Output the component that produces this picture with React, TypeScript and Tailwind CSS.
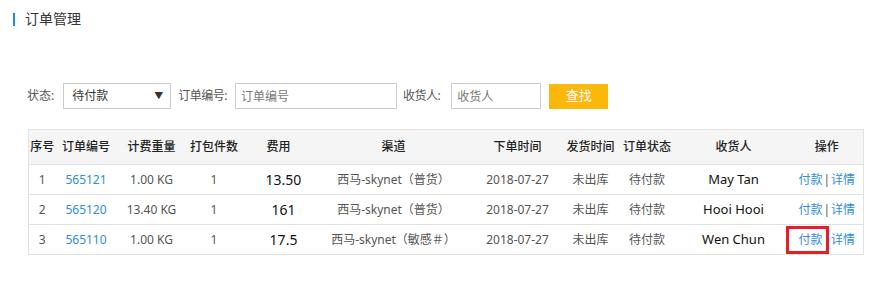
import React from 'react';

const FONT = { fontFamily: '"Noto Sans", "Noto Sans CJK SC", sans-serif' };

type Order = {
  no: number;
  id: string;
  weight: string;
  pkgs: number;
  fee: string;
  channel: string;
  date: string;
  ship: string;
  status: string;
  receiver: string;
};

const ORDERS: Order[] = [
  { no: 1, id: '565121', weight: '1.00 KG', pkgs: 1, fee: '13.50', channel: '西马-skynet（普货）', date: '2018-07-27', ship: '未出库', status: '待付款', receiver: 'May Tan' },
  { no: 2, id: '565120', weight: '13.40 KG', pkgs: 1, fee: '161', channel: '西马-skynet（普货）', date: '2018-07-27', ship: '未出库', status: '待付款', receiver: 'Hooi Hooi' },
  { no: 3, id: '565110', weight: '1.00 KG', pkgs: 1, fee: '17.5', channel: '西马-skynet（敏感＃）', date: '2018-07-27', ship: '未出库', status: '待付款', receiver: 'Wen Chun' },
];

const COLS = [
  { title: '序号', w: 27 },
  { title: '订单编号', w: 61 },
  { title: '计费重量', w: 70 },
  { title: '打包件数', w: 55 },
  { title: '费用', w: 74 },
  { title: '渠道', w: 156 },
  { title: '下单时间', w: 92 },
  { title: '发货时间', w: 54 },
  { title: '订单状态', w: 59 },
  { title: '收货人', w: 114 },
  { title: '操作', w: 73 },
];

export default function App() {
  return (
    <div className="w-[890px] h-[297px] bg-white text-[#333]" style={FONT}>
      {/* page title */}
      <div className="flex items-center pl-[13px] pt-[10px]">
        <span className="w-[2px] h-[13px] bg-[#1d8ce0]" />
        <span className="ml-[10px] text-[14px] leading-[18px] text-[#333]">订单管理</span>
      </div>

      {/* filters */}
      <div className="flex items-center pl-[27px] mt-[55px] text-[12px] text-[#555]">
        <span>状态:</span>
        <div className="ml-[9px] w-[108px] h-[26px] border border-[#ccc] flex items-center justify-between pl-[8px] pr-[7px] text-[#333]">
          <span>待付款</span>
          <span className="text-[9px] text-[#333]">▼</span>
        </div>
        <span className="ml-[7px] tracking-[-0.5px]">订单编号:</span>
        <input
          className="ml-[8px] w-[162px] h-[26px] border border-[#ccc] px-[5px] text-[12px] outline-none placeholder:text-[#777]"
          placeholder="订单编号"
        />
        <span className="ml-[6px] tracking-[-0.5px]">收货人:</span>
        <input
          className="ml-[11px] w-[90px] h-[26px] border border-[#ccc] px-[5px] text-[12px] outline-none placeholder:text-[#777]"
          placeholder="收货人"
        />
        <button className="ml-[8px] w-[59px] h-[25px] bg-[#fcb80a] text-white text-[13px]">查找</button>
      </div>

      {/* orders table */}
      <table className="ml-[28px] mt-[20px] w-[835px] table-fixed border-collapse text-[12px]">
        <colgroup>
          {COLS.map(c => (
            <col key={c.title} style={{ width: c.w }} />
          ))}
        </colgroup>
        <thead>
          <tr className="bg-[#f5f5f5] h-[35px]">
            {COLS.map(c => (
              <th key={c.title} className="border border-[#e2e2e2] font-medium text-[#222] text-center p-0 border-x-0 first:border-l last:border-r">
                {c.title}
              </th>
            ))}
          </tr>
        </thead>
        <tbody>
          {ORDERS.map(o => (
            <tr key={o.id} className="h-[30px] text-[#555] text-center">
              <td className="border-y border-l border-[#e2e2e2]">{o.no}</td>
              <td className="border-y border-[#e2e2e2] text-[#2d8ce3]">{o.id}</td>
              <td className="border-y border-[#e2e2e2]">{o.weight}</td>
              <td className="border-y border-[#e2e2e2]">{o.pkgs}</td>
              <td className="border-y border-[#e2e2e2] text-[14px] text-[#111] pl-[10px]">{o.fee}</td>
              <td className="border-y border-[#e2e2e2]">{o.channel}</td>
              <td className="border-y border-[#e2e2e2]">{o.date}</td>
              <td className="border-y border-[#e2e2e2]">{o.ship}</td>
              <td className="border-y border-[#e2e2e2]">{o.status}</td>
              <td className="border-y border-[#e2e2e2] text-[13px] text-[#111]">{o.receiver}</td>
              <td className="border-y border-r border-[#e2e2e2]">
                <span className="relative text-[#2d8ce3]">
                  付款
                  {o.no === 3 && (
                    <span className="absolute left-[-12px] right-[-7px] top-[-5px] bottom-[-6px] border-[3px] border-[#e61e25]" />
                  )}
                </span>
                <span className="text-[#555] mx-[1px]">|</span>
                <span className="text-[#2d8ce3]">详情</span>
              </td>
            </tr>
          ))}
        </tbody>
      </table>
    </div>
  );
}
